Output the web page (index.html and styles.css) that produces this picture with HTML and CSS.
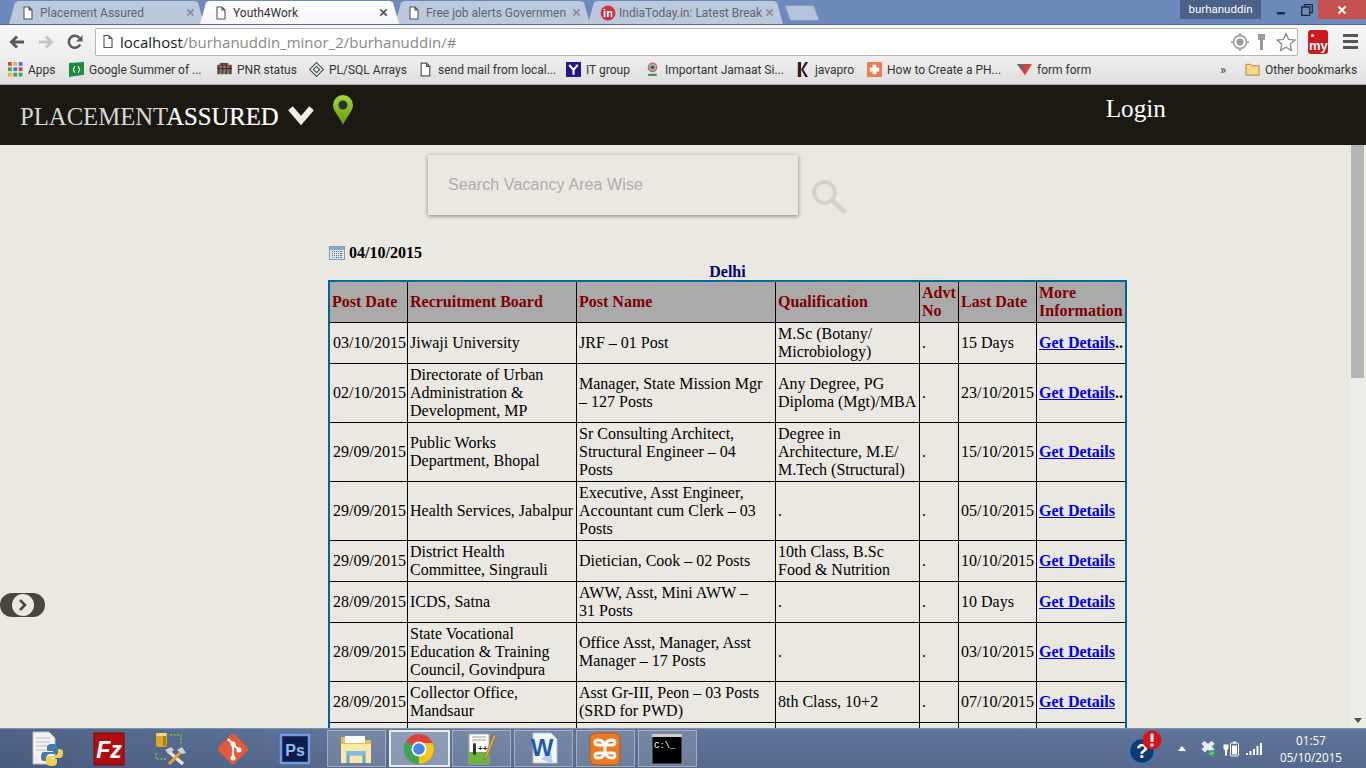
FILE: index.html
```html
<!DOCTYPE html>
<html lang="en">
<head>
    <meta charset="UTF-8">
    <meta name="viewport" content="width=device-width, initial-scale=1.0">
    <title>Youth4Work</title>
    <link rel="stylesheet" href="styles.css">
</head>
<body>
    <svg class="defs" width="0" height="0">
        <symbol id="doc" viewBox="0 0 12 14">
            <path d="M2 1h5l3 3v9H2z M7 1v3h3" fill="#fff" stroke="#555" stroke-width="1.1"/>
        </symbol>
        <symbol id="close" viewBox="0 0 10 10">
            <path d="M1.5 1.5l7 7M8.5 1.5l-7 7" stroke="currentColor" stroke-width="2" fill="none"/>
        </symbol>
    </svg>

    <!-- browser chrome -->
    <div class="tabstrip">
        <div class="tab">
            <svg class="tab-icon"><use href="#doc"/></svg>
            <span class="tab-title">Placement Assured</span>
            <svg class="tab-close"><use href="#close"/></svg>
        </div>
        <div class="tab tab-active">
            <svg class="tab-icon"><use href="#doc"/></svg>
            <span class="tab-title">Youth4Work</span>
            <svg class="tab-close"><use href="#close"/></svg>
        </div>
        <div class="tab">
            <svg class="tab-icon"><use href="#doc"/></svg>
            <span class="tab-title">Free job alerts Governmen</span>
            <svg class="tab-close"><use href="#close"/></svg>
        </div>
        <div class="tab">
            <svg class="tab-icon tab-icon-round" viewBox="0 0 16 16">
                <circle cx="8" cy="8" r="7.5" fill="#c8343f"/>
                <text x="8" y="12" text-anchor="middle" class="in-text">in</text>
            </svg>
            <span class="tab-title">IndiaToday.in: Latest Break</span>
            <svg class="tab-close"><use href="#close"/></svg>
        </div>
        <div class="tab-new"></div>
        <div class="win-controls">
            <div class="user-badge">burhanuddin</div>
            <div class="win-btn">
                <svg width="10" height="10" viewBox="0 0 10 10"><rect x="1" y="7" width="8" height="2.5" fill="#1d2a3c"/></svg>
            </div>
            <div class="win-btn">
                <svg width="12" height="12" viewBox="0 0 12 12"><path d="M3.5 2.5V.7h7.8v8H9M.7 3h8v8.3h-8z" fill="none" stroke="#1d2a3c" stroke-width="1.3"/></svg>
            </div>
            <div class="win-close">
                <svg width="10" height="10"><use href="#close"/></svg>
            </div>
        </div>
    </div>

    <div class="toolbar">
        <svg class="nav-icon" viewBox="0 0 16 14"><path d="M15 7H3M8 1.5L2.5 7 8 12.5" fill="none" stroke="#5a5a5a" stroke-width="3"/></svg>
        <svg class="nav-icon" viewBox="0 0 16 14"><path d="M1 7h12M8 1.5L13.5 7 8 12.5" fill="none" stroke="#c4c4c4" stroke-width="3"/></svg>
        <svg class="nav-icon" viewBox="0 0 16 16"><path d="M13.2 10.5A6 6 0 1 1 12.5 4" fill="none" stroke="#5a5a5a" stroke-width="2.6"/><path d="M15.5 1v6.5H9z" fill="#5a5a5a"/></svg>
        <div class="omnibox">
            <svg class="omni-doc"><use href="#doc"/></svg>
            <span class="url"><span class="url-host">localhost</span>/burhanuddin_minor_2/burhanuddin/#</span>
            <svg class="omni-icon" viewBox="0 0 18 18"><circle cx="9" cy="9" r="6.5" fill="none" stroke="#a8a8a8" stroke-width="2"/><circle cx="9" cy="9" r="3.5" fill="#9a9a9a"/><path d="M9 0v3M9 15v3M0 9h3M15 9h3" stroke="#a8a8a8" stroke-width="2"/></svg>
            <svg class="omni-key" viewBox="0 0 9 18"><path d="M1 1h7v6H6v10H3V7H1z" fill="#9a9a9a"/></svg>
            <svg class="omni-star" viewBox="0 0 20 20"><path d="M10 1.500l2.600 5.800 6.300.7-4.700 4.200 1.300 6.300L10 15.300l-5.500 3.200 1.300-6.300L1.100 8l6.300-.7z" fill="#fff" stroke="#8a8a8a" stroke-width="1.300"/></svg>
        </div>
        <div class="my-ext">
            <span class="my-dot"></span>
            <span class="my-text">my</span>
        </div>
        <div class="menu-icon"><span></span><span></span><span></span></div>
    </div>

    <div class="bookmarks">
        <div class="bm">
            <svg class="bm-icon" viewBox="0 0 14 14">
                <g fill="#d9453a"><rect width="3.500" height="3.500"/><rect x="10" y="5" width="3.500" height="3.500"/></g>
                <g fill="#f2b233"><rect x="5" width="3.500" height="3.500"/><rect y="10" width="3.500" height="3.500"/></g>
                <g fill="#3b78e7"><rect x="10" width="3.500" height="3.500"/><rect x="5" y="5" width="3.500" height="3.500"/></g>
                <g fill="#3aa757"><rect y="5" width="3.500" height="3.500"/><rect x="5" y="10" width="3.500" height="3.500"/><rect x="10" y="10" width="3.500" height="3.500"/></g>
            </svg>
            <span>Apps</span>
        </div>
        <div class="bm">
            <svg class="bm-icon" viewBox="0 0 14 14"><path d="M0 1l14-1v12L0 14z" fill="#1f8a3c"/><path d="M5.500 4L4 7l1.500 3M8.500 4L10 7l-1.500 3" stroke="#fff" fill="none"/></svg>
            <span>Google Summer of ...</span>
        </div>
        <div class="bm">
            <svg class="bm-icon" viewBox="0 0 16 14"><rect y="2" width="16" height="10" fill="#8a6f66"/><path d="M2 2v10M6 2v10M10 2v10M14 2v10M0 6h16" stroke="#3b2f2b"/><rect x="3" width="9" height="3" fill="#5d4a44"/></svg>
            <span>PNR status</span>
        </div>
        <div class="bm">
            <svg class="bm-icon" viewBox="0 0 14 14"><path d="M7 .5L13.500 7 7 13.500.5 7z" fill="#eef2ec" stroke="#40584a"/><path d="M7 4l3 3-3 3-3-3z" fill="none" stroke="#40584a"/></svg>
            <span>PL/SQL Arrays</span>
        </div>
        <div class="bm">
            <svg class="bm-icon"><use href="#doc"/></svg>
            <span>send mail from local...</span>
        </div>
        <div class="bm">
            <svg class="bm-icon" viewBox="0 0 16 16"><rect width="16" height="16" fill="#2b1487"/><path d="M3.500 3L8 8.500 12.500 3M8 8.500V13.500" stroke="#fff" stroke-width="2.200" fill="none"/></svg>
            <span>IT group</span>
        </div>
        <div class="bm">
            <svg class="bm-icon" viewBox="0 0 14 14"><circle cx="7" cy="5" r="4" fill="#9fb0a8" stroke="#c25d3f"/><circle cx="7" cy="5" r="1.500" fill="#445"/><path d="M3 11h8v2H3z" fill="#4c8a5a"/></svg>
            <span>Important Jamaat Si...</span>
        </div>
        <div class="bm">
            <svg class="bm-icon" viewBox="0 0 14 16"><path d="M2 0h3.500v16H2zM5.500 8L10 0h3L8 8l5 8h-3z" fill="#3a1d17"/></svg>
            <span>javapro</span>
        </div>
        <div class="bm">
            <svg class="bm-icon" viewBox="0 0 16 16"><rect width="16" height="16" fill="#e87f4f"/><path d="M6 3h4v3h3v4h-3v3H6v-3H3V6h3z" fill="#fff"/></svg>
            <span>How to Create a PH...</span>
        </div>
        <div class="bm">
            <svg class="bm-icon" viewBox="0 0 16 14"><path d="M0 1h16L8.500 13z" fill="#d9403a"/><path d="M0 1h9L5 7z" fill="#666"/></svg>
            <span>form form</span>
        </div>
        <div class="bm-more">»</div>
        <div class="bm">
            <svg class="bm-icon" viewBox="0 0 16 14"><path d="M1 3V1.500h5L7.500 3H15v10H1z" fill="#f5d78e" stroke="#a5813c"/></svg>
            <span>Other bookmarks</span>
        </div>
    </div>

    <!-- page -->
    <header class="site-header">
        <div class="brand">PLACEMENT<span class="brand-strong">ASSURED</span></div>
        <svg class="brand-chevron" viewBox="0 0 24 18"><path d="M2.500 3l9.500 11 9.500-11" fill="none" stroke="#f1efe9" stroke-width="5.500"/></svg>
        <svg class="brand-pin" viewBox="0 0 20 30">
            <defs><linearGradient id="pinfill" x1="0" y1="0" x2="0" y2="1"><stop offset="0" stop-color="#a5d63a"/><stop offset="1" stop-color="#5d9c10"/></linearGradient></defs>
            <path d="M10 0a10 10 0 0 1 10 10c0 6-6 11-10 20C6 21 0 16 0 10A10 10 0 0 1 10 0z" fill="url(#pinfill)"/>
            <circle cx="10" cy="10" r="4.500" fill="#2c3030"/>
        </svg>
        <a class="login">Login</a>
    </header>

    <div class="viewport">
        <div class="page">
            <div class="search-row">
                <input class="search-input" type="text" placeholder="Search Vacancy Area Wise">
                <svg class="search-icon" viewBox="0 0 38 38"><circle cx="13.500" cy="13.500" r="10.500" fill="none" stroke="#d4d1cb" stroke-width="4"/><path d="M22 22l13 12" stroke="#d4d1cb" stroke-width="5"/></svg>
            </div>

            <div class="jobs">
                <div class="date-line">
                    <svg class="cal-icon" viewBox="0 0 16 14">
                        <rect x=".5" y=".5" width="15" height="13" fill="#dfe7f2" stroke="#7f99ba"/>
                        <rect x="1" y="1" width="14" height="3" fill="#8da7c8"/>
                        <g fill="#5b6f8a">
                            <rect x="3" y="5" width="10" height="1"/>
                            <rect x="3" y="7" width="10" height="1"/>
                            <rect x="3" y="9" width="10" height="1"/>
                            <rect x="3" y="11" width="10" height="1"/>
                        </g>
                        <path d="M4.500 5v7M6.500 5v7M8.500 5v7M10.500 5v7" stroke="#dfe7f2"/>
                    </svg>
                    <b>04/10/2015</b>
                </div>
                <div class="city">Delhi</div>
                <table class="jobs-table">
                    <colgroup>
                        <col class="c-date"><col class="c-board"><col class="c-post"><col class="c-qual">
                        <col class="c-advt"><col class="c-last"><col class="c-more">
                    </colgroup>
                    <thead>
                        <tr>
                            <th>Post Date</th><th>Recruitment Board</th><th>Post Name</th><th>Qualification</th>
                            <th>Advt No</th><th>Last Date</th><th>More Information</th>
                        </tr>
                    </thead>
                    <tbody>
                        <tr>
                            <td>03/10/2015</td><td>Jiwaji University</td><td>JRF – 01 Post</td><td>M.Sc (Botany/ Microbiology)</td>
                            <td>.</td><td>15 Days</td><td><a href="#">Get Details</a><b>..</b></td>
                        </tr>
                        <tr>
                            <td>02/10/2015</td><td>Directorate of Urban Administration &amp; Development, MP</td><td>Manager, State Mission Mgr – 127 Posts</td><td>Any Degree, PG Diploma (Mgt)/MBA</td>
                            <td>.</td><td>23/10/2015</td><td><a href="#">Get Details</a><b>..</b></td>
                        </tr>
                        <tr>
                            <td>29/09/2015</td><td>Public Works Department, Bhopal</td><td>Sr Consulting Architect, Structural Engineer – 04 Posts</td><td>Degree in Architecture, M.E/ M.Tech (Structural)</td>
                            <td>.</td><td>15/10/2015</td><td><a href="#">Get Details</a></td>
                        </tr>
                        <tr>
                            <td>29/09/2015</td><td>Health Services, Jabalpur</td><td>Executive, Asst Engineer, Accountant cum Clerk – 03 Posts</td><td>.</td>
                            <td>.</td><td>05/10/2015</td><td><a href="#">Get Details</a></td>
                        </tr>
                        <tr>
                            <td>29/09/2015</td><td>District Health Committee, Singrauli</td><td>Dietician, Cook – 02 Posts</td><td>10th Class, B.Sc Food &amp; Nutrition</td>
                            <td>.</td><td>10/10/2015</td><td><a href="#">Get Details</a></td>
                        </tr>
                        <tr>
                            <td>28/09/2015</td><td>ICDS, Satna</td><td>AWW, Asst, Mini AWW – 31 Posts</td><td>.</td>
                            <td>.</td><td>10 Days</td><td><a href="#">Get Details</a></td>
                        </tr>
                        <tr>
                            <td>28/09/2015</td><td>State Vocational Education &amp; Training Council, Govindpura</td><td>Office Asst, Manager, Asst Manager – 17 Posts</td><td>.</td>
                            <td>.</td><td>03/10/2015</td><td><a href="#">Get Details</a></td>
                        </tr>
                        <tr>
                            <td>28/09/2015</td><td>Collector Office, Mandsaur</td><td>Asst Gr-III, Peon – 03 Posts (SRD for PWD)</td><td>8th Class, 10+2</td>
                            <td>.</td><td>07/10/2015</td><td><a href="#">Get Details</a></td>
                        </tr>
                        <tr class="row-cut">
                            <td></td><td></td><td></td><td></td><td></td><td></td><td></td>
                        </tr>
                    </tbody>
                </table>
            </div>

            <div class="side-handle">
                <span class="side-knob">
                    <svg width="10" height="12" viewBox="0 0 10 12"><path d="M2 1l5 5-5 5" fill="none" stroke="#4a463f" stroke-width="2.500"/></svg>
                </span>
            </div>
        </div>
        <div class="scrollbar">
            <div class="scroll-thumb"></div>
            <div class="scroll-down"></div>
        </div>
    </div>

    <!-- windows taskbar -->
    <div class="taskbar">
        <div class="task">
            <svg class="task-icon" viewBox="0 0 32 36">
                <path d="M2 1h16l6 6v26H2z" fill="#f2f2f2" stroke="#bbb"/>
                <path d="M5 7h14M5 11h14M5 15h14M5 19h10" stroke="#bbb"/>
                <path d="M21 13c-4 0-5 2-5 4v3h6v1h-9c-2 0-3 2-3 5s1 4 3 4h2v-3c0-2 2-4 4-4h5c2 0 3-1 3-3v-3c0-3-2-4-6-4z" fill="#3f7cb0"/>
                <path d="M21 35c4 0 5-2 5-4v-3h-6v-1h9c2 0 3-2 3-5s-1-4-3-4h-2v3c0 2-2 4-4 4h-5c-2 0-3 1-3 3v3c0 3 2 4 6 4z" fill="#f5cf4b"/>
            </svg>
        </div>
        <div class="task">
            <svg class="task-icon" viewBox="0 0 32 36">
                <rect x="1" y="2" width="30" height="32" fill="#b20d0d" stroke="#7a0808"/>
                <text x="16" y="27" text-anchor="middle" class="fz-text">Fz</text>
            </svg>
        </div>
        <div class="task">
            <svg class="task-icon" viewBox="0 0 32 36">
                <rect x="1" y="2" width="11" height="14" rx="2" fill="#dba826"/>
                <rect x="1" y="2" width="11" height="3" rx="1.500" fill="#f3d676"/>
                <rect x="8" y="5" width="3" height="10" fill="#a87d14"/>
                <path d="M15 4h11v11M1 22v6h10" fill="none" stroke="#69b23f" stroke-width="2" stroke-dasharray="2 1.500"/>
                <path d="M13 20l15 13" stroke="#e6e6e6" stroke-width="3.500"/>
                <path d="M10 19l6-3 3 3-5 4z" fill="#d0d0d0"/>
                <path d="M25 22L14 33" stroke="#e8a32c" stroke-width="3"/>
                <path d="M22 19l5-3 4 6-4 1z" fill="#cfd4da"/>
            </svg>
        </div>
        <div class="task">
            <svg class="task-icon" viewBox="0 0 32 36">
                <rect x="4.500" y="6.500" width="23" height="23" rx="3" fill="#e8583a" transform="rotate(45 16 18)"/>
                <path d="M11 8l11 11M16 13v14" stroke="#fff" stroke-width="2.200"/>
                <circle cx="16" cy="13" r="2.500" fill="#fff"/><circle cx="16" cy="27" r="2.500" fill="#fff"/><circle cx="22" cy="19" r="2.500" fill="#fff"/>
            </svg>
        </div>
        <div class="task">
            <svg class="task-icon" viewBox="0 0 32 36">
                <rect x="2" y="4" width="28" height="28" fill="#101c4e" stroke="#6d9de0" stroke-width="2.500"/>
                <text x="16" y="25" text-anchor="middle" class="ps-text">Ps</text>
            </svg>
        </div>
        <div class="task task-open task-first">
            <svg class="task-icon" viewBox="0 0 32 36">
                <path d="M1 6h12l2 3h16v23H1z" fill="#e9bd55"/>
                <rect x="5" y="5" width="20" height="7" fill="#fff"/>
                <path d="M1 13h30v19H1z" fill="#fbe8a6"/>
                <path d="M8 32v-9h16v9" fill="none" stroke="#5fa8d6" stroke-width="3"/>
                <rect x="6" y="20" width="20" height="4" fill="#7cc0e6"/>
            </svg>
        </div>
        <div class="task task-open task-active">
            <svg class="task-icon" viewBox="0 0 32 32">
                <circle cx="16" cy="16" r="15" fill="#db4437"/>
                <path d="M16 16L3 23.500A15 15 0 0 0 16 31z" fill="#3aa757"/>
                <path d="M16 16L3 23.500A15 15 0 0 1 3 8.500z" fill="#3aa757"/>
                <path d="M16 16V31A15 15 0 0 0 29.700 10H16z" fill="#f5c518"/>
                <circle cx="16" cy="16" r="7.500" fill="#fff"/>
                <circle cx="16" cy="16" r="5.800" fill="#4a86e8"/>
            </svg>
        </div>
        <div class="task task-open">
            <svg class="task-icon" viewBox="0 0 32 36">
                <path d="M4 3h20v30H4z" fill="#fff" stroke="#aaa"/>
                <path d="M4 21h20v12H4z" fill="#6ab53a"/>
                <path d="M7 6h14M7 9h14" stroke="#999"/>
                <text x="13" y="20" class="npp-text">++</text>
                <rect x="8" y="12" width="3" height="12" rx="1.500" fill="#333"/>
                <path d="M29 3L20 25l-1 4 3-3L31 5z" fill="#e8b33a" stroke="#8a5a1a" stroke-width=".6"/>
            </svg>
        </div>
        <div class="task task-open">
            <svg class="task-icon" viewBox="0 0 32 36">
                <path d="M6 2h18l6 6v24H6z" fill="#f5f7fb" stroke="#b8c2d2"/>
                <path d="M14 28l12 5-2-12z" fill="#b9cbe6"/>
                <text x="15" y="25" text-anchor="middle" class="word-text">W</text>
            </svg>
        </div>
        <div class="task task-open">
            <svg class="task-icon" viewBox="0 0 32 36">
                <rect x="1" y="2" width="30" height="32" rx="6" fill="#ee7a1f" stroke="#b9570f"/>
                <path d="M9 9c7 0 7 6 7 9s0 9-7 9c-4 0-4-5 0-5h14c4 0 4 5 0 5-7 0-7-6-7-9s0-9 7-9c4 0 4 5 0 5H9c-4 0-4-5 0-5z" fill="none" stroke="#fff" stroke-width="2.800"/>
            </svg>
        </div>
        <div class="task task-open">
            <svg class="task-icon" viewBox="0 0 32 36">
                <rect x="1" y="3" width="30" height="30" fill="#000" stroke="#888"/>
                <rect x="1" y="3" width="30" height="3" fill="#ccc"/>
                <text x="3" y="17" class="cmd-text">C:\_</text>
            </svg>
        </div>

        <div class="tray">
            <svg class="tray-help" viewBox="0 0 34 34">
                <circle cx="13" cy="21" r="12.500" fill="#12396e" stroke="#2a7fc4" stroke-width="1.500"/>
                <text x="13" y="28" text-anchor="middle" class="help-text">?</text>
                <circle cx="23" cy="10" r="9.500" fill="#d8121d"/>
                <rect x="21.500" y="3.500" width="3" height="8.500" rx="1" fill="#fff"/>
                <rect x="21.500" y="13.500" width="3" height="3" fill="#fff"/>
            </svg>
            <svg class="tray-up" viewBox="0 0 8 5"><path d="M0 5L4 0l4 5z" fill="#fff"/></svg>
            <svg class="tray-icon" viewBox="0 0 16 18">
                <path d="M4 1l4 3 4-3 3 3-3 3 3 3-4 3-3-3-3 3-4-3 3-3-3-3z" fill="#e8edf5"/>
                <circle cx="12" cy="14" r="3.500" fill="#3aa757"/>
                <path d="M10.500 14l1 1 2-2" stroke="#fff" fill="none"/>
            </svg>
            <svg class="tray-icon" viewBox="0 0 16 16">
                <path d="M1.500 1v3M4.500 1v3M.5 4h5v4l-1.500 2v5H2v-5L.5 8z" fill="#fff"/>
                <rect x="7.500" y="2.500" width="8" height="13" rx="1" fill="none" stroke="#fff"/>
                <rect x="10" y="1" width="3" height="2" fill="#fff"/>
                <rect x="9" y="5" width="5" height="9" fill="#fff"/>
            </svg>
            <svg class="tray-icon tray-signal" viewBox="0 0 16 12">
                <path d="M0 10h2v2H0zM3.500 8h2v4h-2zM7 6h2v6H7zM10.500 3h2v9h-2zM14 0h2v12h-2z" fill="#fff"/>
            </svg>
            <div class="clock">
                <div>01:57</div>
                <div>05/10/2015</div>
            </div>
        </div>
    </div>
</body>
</html>
```

FILE: styles.css
```css
* {
    box-sizing: border-box;
}

html, body {
    height: 100%;
    margin: 0;
}

body {
    width: 1366px;
    height: 768px;
    overflow: hidden;
    display: flex;
    flex-direction: column;
    font-family: "Liberation Serif", serif;
    background: #ebe8e2;
}

.defs {
    display: block;
    height: 0;
}

/* tab strip */
.tabstrip {
    height: 24px;
    flex: none;
    display: flex;
    align-items: flex-end;
    padding-left: 9px;
    background: #6b8abb;
    font-family: Roboto, sans-serif;
    font-size: 12px;
}

.tab {
    width: 195px;
    height: 23px;
    margin-right: -2px;
    padding: 0 9px 0 13px;
    display: flex;
    align-items: center;
    background: #bcc8dc;
    color: #5d6675;
    clip-path: polygon(0 100%, 6px 6%, 9px 0, calc(100% - 9px) 0, calc(100% - 6px) 6%, 100% 100%);
}

.tab-active {
    position: relative;
    z-index: 1;
    width: 199px;
    margin-left: -2px;
    margin-right: -4px;
    padding: 0 11px 0 15px;
    background: linear-gradient(#fff, #f6f6f6);
    color: #333;
}

.tab-icon {
    width: 12px;
    height: 14px;
    flex: none;
    margin-right: 6px;
}

.tab-icon-round {
    width: 16px;
    height: 16px;
    margin-left: -1px;
    margin-right: 3px;
}

.in-text {
    font: bold 11px "Liberation Sans", sans-serif;
    fill: #fff;
}

.tab-title {
    flex: 1;
    white-space: nowrap;
}

.tab-close {
    width: 9px;
    height: 9px;
    flex: none;
    color: #8a8f98;
}

.tab-active .tab-close {
    color: #555;
}

.tab-new {
    width: 30px;
    height: 16px;
    margin: 0 0 3px 6px;
    background: #b4c4dc;
    border: 1px solid #8298bb;
    border-radius: 2px;
    transform: skewX(20deg);
}

.win-controls {
    margin-left: auto;
    align-self: flex-start;
    display: flex;
    height: 19px;
}

.user-badge {
    width: 81px;
    margin-right: 7px;
    background: #4a6288;
    color: #fff;
    text-align: center;
    line-height: 18px;
    font-size: 11.5px;
}

.win-btn {
    width: 26px;
    display: flex;
    align-items: center;
    justify-content: center;
}

.win-close {
    width: 48px;
    margin-left: -2px;
    background: #c75050;
    color: #fff;
    display: flex;
    align-items: center;
    justify-content: center;
}

/* toolbar */
.toolbar {
    height: 34px;
    flex: none;
    display: flex;
    align-items: center;
    padding: 0 8px 0 9px;
    background: linear-gradient(#f6f6f6, #eee);
    border-top: 1px solid #54688a;
}

.nav-icon {
    width: 16px;
    height: 16px;
    flex: none;
    margin-right: 13px;
}

.omnibox {
    width: 1204px;
    height: 28px;
    margin-left: -1px;
    display: flex;
    align-items: center;
    padding: 0 1px 0 6px;
    background: #fff;
    border: 1px solid #b5b5b5;
    border-radius: 2px;
}

.omni-doc {
    width: 12px;
    height: 15px;
    flex: none;
}

.url {
    flex: 1;
    margin-left: 6px;
    font-family: "Open Sans", sans-serif;
    font-size: 15px;
    color: #888;
}

.url-host {
    color: #222;
}

.omni-icon {
    width: 18px;
    height: 18px;
}

.omni-key {
    width: 9px;
    height: 18px;
    margin: 0 10px 0 8px;
}

.omni-star {
    width: 20px;
    height: 20px;
}

.my-ext {
    position: relative;
    width: 20px;
    height: 24px;
    margin-left: 10px;
    background: #cc1a1f;
    border-radius: 3px;
    color: #fff;
}

.my-dot {
    position: absolute;
    left: 3px;
    top: 4px;
    width: 3px;
    height: 3px;
    background: #fff;
    border-radius: 50%;
}

.my-text {
    position: absolute;
    left: 1px;
    bottom: 1px;
    font: bold 13px/14px "Liberation Sans", sans-serif;
}

.menu-icon {
    width: 15px;
    margin-left: 15px;
    display: flex;
    flex-direction: column;
    gap: 3px;
}

.menu-icon span {
    height: 3px;
    background: #555;
}

/* bookmarks */
.bookmarks {
    height: 27px;
    flex: none;
    display: grid;
    grid-template-columns: 61px 148px 92px 109px 148px 79px 150px 72px 150px 203px 25px 1fr;
    align-items: center;
    padding: 0 0 3px 8px;
    background: linear-gradient(#eee, #dedede);
    border-bottom: 1px solid #a8a8a8;
    font-family: Roboto, sans-serif;
    font-size: 12px;
    color: #333;
}

.bm {
    display: flex;
    align-items: center;
    white-space: nowrap;
}

.bm-icon {
    width: 15px;
    height: 15px;
    flex: none;
    margin-right: 5px;
}

.bm-more {
    font-size: 13px;
}

/* site header */
.site-header {
    height: 60px;
    flex: none;
    display: flex;
    align-items: flex-start;
    padding-left: 20px;
    background: #1c1913;
}

.brand {
    margin-top: 17px;
    font-size: 24.7px;
    line-height: 30px;
    color: #d5d7d5;
}

.brand-strong {
    color: #fff;
    -webkit-text-stroke: 0.2px #fff;
}

.brand-chevron {
    width: 28px;
    height: 20px;
    margin: 20px 0 0 8px;
}

.brand-pin {
    width: 20px;
    height: 30px;
    margin: 10px 0 0 18px;
}

.login {
    margin: 9px 0 0 753px;
    font-size: 25.2px;
    line-height: 30px;
    color: #fff;
}

.viewport {
    flex: 1;
    min-height: 0;
    display: flex;
    overflow: hidden;
}

.page {
    position: relative;
    flex: 1;
    min-width: 0;
}

/* search */
.search-row {
    height: 70px;
    display: flex;
    align-items: flex-start;
    padding: 10px 0 0 428px;
}

.search-input {
    width: 370px;
    height: 60px;
    padding: 0 20px;
    background: #ebe8e2;
    border: 0;
    box-shadow: 0 1px 4px rgba(0, 0, 0, 0.45);
    font-family: "Liberation Sans", sans-serif;
    font-size: 16px;
    letter-spacing: 0.1px;
}

.search-input::placeholder {
    color: #aeacaa;
}

.search-icon {
    width: 38px;
    height: 38px;
    margin: 24px 0 0 13px;
}

/* table */
.jobs {
    width: 799px;
    margin-left: 328px;
    padding-top: 29px;
}

.date-line {
    height: 18px;
    display: flex;
    align-items: center;
    font-size: 16px;
    color: #000;
}

.cal-icon {
    width: 16px;
    height: 14px;
    margin: 0 4px 0 1px;
}

.city {
    height: 17px;
    margin-top: 1px;
    text-align: center;
    font-size: 16px;
    line-height: 18px;
    font-weight: bold;
    color: #000080;
}

.jobs-table {
    width: 799px;
    table-layout: fixed;
    border-collapse: separate;
    border-spacing: 0;
    border: 2px solid #006699;
    font-size: 16px;
    line-height: 18px;
    color: #000;
}

.c-date { width: 78px; }
.c-board { width: 169px; }
.c-post { width: 199px; }
.c-qual { width: 144px; }
.c-advt { width: 39px; }
.c-last { width: 78px; }
.c-more { width: 88px; }

.jobs-table th,
.jobs-table td {
    padding: 2px;
    border-right: 1px solid #000;
    border-bottom: 1px solid #000;
    text-align: left;
    vertical-align: middle;
    overflow: hidden;
}

.jobs-table td:first-child {
    padding-left: 3px;
}

.jobs-table td:nth-child(3) {
    padding-right: 8px;
}

.jobs-table th:last-child,
.jobs-table td:last-child {
    border-right: 0;
}

.jobs-table th {
    background: #aaa;
    color: #800000;
}

.jobs-table a {
    font-weight: bold;
    color: #0000ee;
}

.row-cut td {
    height: 40px;
}

/* left handle */
.side-handle {
    position: absolute;
    left: 0;
    top: 448px;
    width: 45px;
    height: 24px;
    display: flex;
    align-items: center;
    justify-content: center;
    background: #4a463f;
    border-radius: 12px;
}

.side-knob {
    width: 22px;
    height: 22px;
    display: flex;
    align-items: center;
    justify-content: center;
    background: #ebe8e2;
    border-radius: 50%;
}

/* scrollbar */
.scrollbar {
    position: relative;
    width: 16px;
    flex: none;
    background: #ececE8;
}

.scroll-thumb {
    height: 233px;
    margin: 0 2px 0 1px;
    background: #b6b6b6;
}

.scroll-down {
    position: absolute;
    left: 4px;
    bottom: 5px;
    border: 4px solid transparent;
    border-top: 5px solid #505050;
    border-bottom: 0;
}

/* taskbar */
.taskbar {
    height: 40px;
    flex: none;
    display: flex;
    align-items: stretch;
    padding: 1px 0 1px 16px;
    background: linear-gradient(90deg, rgba(30, 50, 85, 0.25), rgba(30, 50, 85, 0) 25%), linear-gradient(#5f7599, #56698c);
    border-top: 1px solid #7f92b2;
}

.task {
    width: 61.9px;
    flex: none;
    display: flex;
    align-items: center;
    justify-content: center;
}

.task-open {
    background: rgba(255, 255, 255, 0.14);
    border: 1px solid rgba(255, 255, 255, 0.35);
    margin-right: 3px;
    width: 59px;
}

.task-first {
    margin-left: 1.5px;
}

.task-active {
    width: 61px;
    margin-right: 2px;
    background: rgba(255, 255, 255, 0.3);
    border: 2px solid rgba(255, 255, 255, 0.8);
}

.task-icon {
    width: 32px;
    height: 36px;
}

.fz-text {
    font: italic bold 23px "Liberation Sans", sans-serif;
    fill: #fff;
}

.ps-text {
    font: bold 16px "Liberation Sans", sans-serif;
    fill: #8fbdf0;
}

.npp-text {
    font: bold 8px "Liberation Sans", sans-serif;
    fill: #222;
}

.word-text {
    font: bold 24px "Liberation Sans", sans-serif;
    fill: #1d5bb0;
}

.cmd-text {
    font: 9px "Liberation Mono", monospace;
    fill: #fff;
}

.help-text {
    font: bold 20px "Liberation Sans", sans-serif;
    fill: #fff;
}

.tray {
    margin-left: auto;
    display: flex;
    align-items: center;
    padding-right: 24px;
    color: #fff;
    font-family: "Open Sans", sans-serif;
    font-size: 11.7px;
}

.tray-help {
    width: 34px;
    height: 34px;
    margin-right: 15px;
    align-self: flex-start;
}

.tray-up {
    width: 8px;
    height: 5px;
    margin-right: 14px;
}

.tray-icon {
    width: 16px;
    height: 17px;
    margin-right: 7px;
}

.tray-signal {
    width: 16px;
    height: 12px;
    margin-right: 18px;
}

.clock {
    width: 62px;
    text-align: center;
    line-height: 17px;
}
```
